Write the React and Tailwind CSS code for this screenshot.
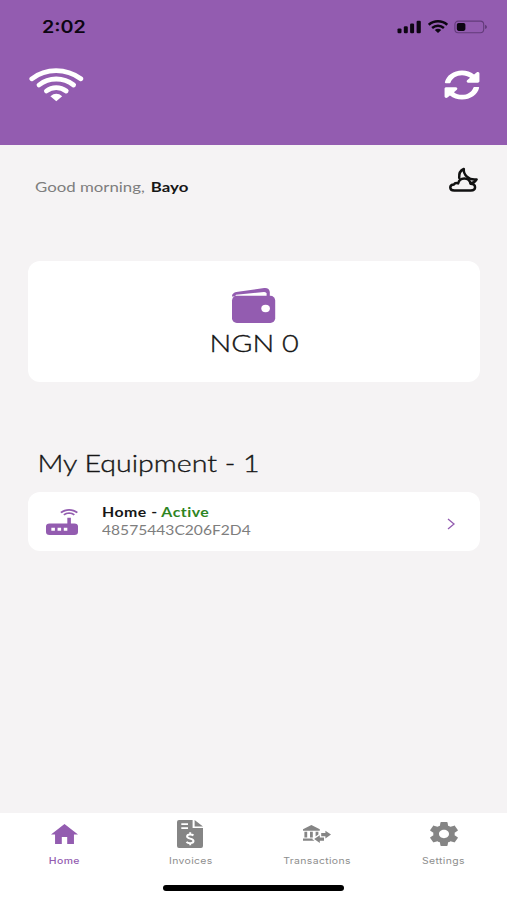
import React from 'react';
import { FaSyncAlt } from 'react-icons/fa';

const WifiIcon = () => (
  <svg width="56" height="34" viewBox="0 0 56 34" fill="none" stroke="#fff" strokeWidth="4.8" strokeLinecap="round">
    <path d="M3.8 10.8C18 0 38 0 52.8 10.8" />
    <path d="M11 17C21 9 35.4 9 45.6 17" />
    <path d="M18.4 23C24 18.4 32.4 18.4 38.2 23" />
    <path d="M22.4 28.2Q28.3 23.4 34.2 28.2L28.3 33.2Z" fill="#fff" stroke="none" />
  </svg>
);

const SignalIcon = () => (
  <svg width="25" height="14" viewBox="0 0 25 14" fill="#0d0612">
    <rect x="0.5" y="8.4" width="4" height="4.8" rx="1.2" />
    <rect x="6.8" y="6.2" width="4" height="7" rx="1.2" />
    <rect x="13.1" y="3.5" width="4" height="9.7" rx="1.2" />
    <rect x="19.6" y="0.8" width="4.2" height="12.4" rx="1.2" />
  </svg>
);

const StatusWifiIcon = () => (
  <svg width="20" height="13" viewBox="0 0 20 13" fill="none" stroke="#0d0612" strokeWidth="2.5">
    <path d="M0.8 4.8C6 .2 14 .2 19.2 4.8" />
    <path d="M4.1 8C7.5 5 12.5 5 15.9 8" />
    <path d="M6.8 10.1Q10 7.5 13.2 10.1L10 13Z" fill="#0d0612" stroke="none" />
  </svg>
);

const BatteryIcon = () => (
  <svg width="34" height="14" viewBox="0 0 34 14" fill="none">
    <rect x="0.9" y="1.1" width="28.8" height="11.6" rx="3.4" stroke="#633b7a" strokeWidth="1.1" />
    <rect x="2.8" y="2.9" width="8.6" height="8" rx="1.8" fill="#0d0612" />
    <path d="M31 4.7Q33 5.4 33 6.9Q33 8.4 31 9.1Z" fill="#633b7a" />
  </svg>
);

const NightIcon = () => (
  <svg width="31" height="26" viewBox="0 0 31 26" fill="none" stroke="#111" strokeWidth="2.5" strokeLinejoin="round" strokeLinecap="round">
    <path d="M6.2 23.4H22.8C28.4 23.4 28.6 17 22.6 16.8C21.4 9.6 11.3 9.8 10.2 16.4C8 15.6 6.6 16.3 6 17.4C1 17.5 1 23.4 6.2 23.4Z" />
    <path d="M11.2 11C10.8 6.6 12.4 3.4 15.8 2C15.2 7.4 20.4 13.6 28.6 12.4C27.1 15 25.1 16 22.7 16.2" />
  </svg>
);

const WalletIcon = () => (
  <svg className="-ml-[2px]" width="45" height="37" viewBox="0 0 45 37">
    <path d="M7 4.7L33.2 1C36.4 .6 38.7 2.3 38.8 5V9.6H1C1 7 2.7 5.2 7 4.7Z" fill="#935cb0" />
    <path d="M4.4 8.9L5 7.8L33 5Q35.4 4.9 35.6 6.6V8.9Z" fill="#fff" />
    <rect x="1" y="8.8" width="43.2" height="27.2" rx="4.8" fill="#935cb0" />
    <ellipse cx="34.6" cy="21.5" rx="4.3" ry="3.7" fill="#fff" />
  </svg>
);

const RouterIcon = () => (
  <svg width="32" height="26" viewBox="3 3 18 18" preserveAspectRatio="none" fill="#935cb0">
    <path d="M20.2 5.9l.8-.8C19.6 3.7 17.8 3 16 3s-3.6.7-5 2.1l.8.8C13 4.8 14.5 4.2 16 4.2s3 .6 4.2 1.7m-.9.8c-.9-.9-2.1-1.4-3.3-1.4s-2.4.5-3.3 1.4l.8.8c.7-.7 1.6-1 2.5-1s1.8.3 2.5 1l.8-.8M19 13h-2V9h-2v4H5a2 2 0 0 0-2 2v4a2 2 0 0 0 2 2h14a2 2 0 0 0 2-2v-4a2 2 0 0 0-2-2M8 18H6v-2h2v2m3.5 0h-2v-2h2v2m3.5 0h-2v-2h2v2Z" />
  </svg>
);

const HomeIcon = () => (
  <svg width="27" height="20" viewBox="2 3 20 17" preserveAspectRatio="none" fill="#935cb0">
    <path d="M10 20v-6h4v6h5v-8h3L12 3 2 12h3v8z" />
  </svg>
);

const InvoiceIcon = () => (
  <svg className="-ml-px" width="26" height="28" viewBox="0 0 26 28" fill="#858585">
    <path d="M2 0H15.6V8H26V26Q26 28 24 28H2Q0 28 0 26V2Q0 0 2 0Z" />
    <path d="M17.6 0L26 6.5H17.6Z" />
    <path d="M4.3 4.2H11M4.3 8.2H11" stroke="#fff" strokeWidth="1.7" />
    <path d="M16.4 15.5C15.4 14.4 10.1 13.8 10.1 16.6C10.1 19.4 16.5 17.8 16.5 21C16.5 23.8 11 23.6 9.5 21.8M13.2 12.2V14.7M13.2 23V25.3" fill="none" stroke="#fff" strokeWidth="2" />
  </svg>
);

const TransferIcon = () => (
  <svg width="28" height="18" viewBox="2 4 20 16" preserveAspectRatio="none" fill="#858585">
    <path d="M15 14V11H18V9L22 12.5L18 16V14H15M14 7.7V9H2V7.7L8 4L14 7.7M7 10H9V15H7V10M3 10H5V15H3V10M13 10V12.5L11 14.3V10H13M9.1 16L8.5 16.5L10.2 18H2V16H9.1M17 15V18H14V20L10 16.5L14 13V15H17Z" />
  </svg>
);

const SettingsIcon = () => (
  <svg width="28" height="24" viewBox="2.2 2 19.6 20" preserveAspectRatio="none" fill="#858585">
    <path d="M19.43 12.98c.04-.32.07-.64.07-.98s-.03-.66-.07-.98l2.11-1.65c.19-.15.24-.42.12-.64l-2-3.46c-.12-.22-.39-.3-.61-.22l-2.49 1c-.52-.4-1.08-.73-1.69-.98l-.38-2.65C14.46 2.18 14.25 2 14 2h-4c-.25 0-.46.18-.49.42l-.38 2.65c-.61.25-1.17.59-1.69.98l-2.49-1c-.23-.09-.49 0-.61.22l-2 3.46c-.13.22-.07.49.12.64l2.11 1.65c-.04.32-.07.65-.07.98s.03.66.07.98l-2.11 1.65c-.19.15-.24.42-.12.64l2 3.46c.12.22.39.3.61.22l2.49-1c.52.4 1.08.73 1.69.98l.38 2.65c.03.24.24.42.49.42h4c.25 0 .46-.18.49-.42l.38-2.65c.61-.25 1.17-.59 1.69-.98l2.49 1c.23.09.49 0 .61-.22l2-3.46c.12-.22.07-.49-.12-.64l-2.11-1.65zM12 15.5c-1.93 0-3.5-1.57-3.5-3.5s1.57-3.5 3.5-3.5 3.5 1.57 3.5 3.5-1.57 3.5-3.5 3.5z" />
  </svg>
);

const tabs = [
  { label: 'Home', icon: HomeIcon, active: true },
  { label: 'Invoices', icon: InvoiceIcon },
  { label: 'Transactions', icon: TransferIcon },
  { label: 'Settings', icon: SettingsIcon },
];

const App = () => {
  return (
    <div className="flex h-[900px] w-[507px] flex-col overflow-hidden bg-[#f5f3f4] font-['Lato',sans-serif] text-[#161616]">
      <header className="h-[145px] shrink-0 bg-[#935cb0]">
        <div className="flex h-[53px] items-center justify-between pl-[42px] pr-[19px]">
          <span className="origin-left scale-x-[1.16] pt-[2px] font-['Inter',sans-serif] text-[17px] font-semibold leading-none text-[#0d0612]">2:02</span>
          <div className="flex items-center gap-[6px]">
            <SignalIcon />
            <StatusWifiIcon />
            <BatteryIcon />
          </div>
        </div>
        <div className="flex h-[63px] items-center justify-between pl-[28px] pr-[27px]">
          <WifiIcon />
          <FaSyncAlt className="h-[30px] w-[36px] text-white" preserveAspectRatio="none" />
        </div>
      </header>

      <main className="flex-1 pl-[28px] pr-[27px]">
        <div className="flex items-start justify-between pl-[7px] pr-px pt-[22px]">
          <p className="mt-[10px] origin-left scale-x-[1.2] whitespace-nowrap text-[14px] leading-5 text-[#7e7e7e]">
            Good morning, <span className="ml-[1.5px] font-bold text-[#161616]">Bayo</span>
          </p>
          <NightIcon />
        </div>

        <section className="mt-[64px] flex h-[121px] flex-col items-center rounded-xl bg-white pt-[26px]">
          <WalletIcon />
          <p className="mt-[3px] scale-x-[1.2] text-[24px] font-light leading-8 [-webkit-text-stroke:0.35px_#161616]">NGN 0</p>
        </section>

        <h2 className="mt-[65px] w-fit origin-left scale-x-[1.19] pl-[8px] text-[24px] font-light leading-8 [-webkit-text-stroke:0.35px_#161616]">My Equipment - 1</h2>

        <section className="mt-[13px] flex h-[59px] items-center rounded-xl bg-white pl-[18px] pr-[24px]">
          <RouterIcon />
          <div className="-mt-[2px] ml-[24px] flex-1">
            <p className="w-fit origin-left scale-x-[1.22] text-[13px] font-bold leading-[18px] tracking-[0.4px]">
              Home - <span className="text-[#2e8523]">Active</span>
            </p>
            <p className="w-fit origin-left scale-x-[1.2] text-[13px] leading-[18px] text-[#7e7e7e]">48575443C206F2D4</p>
          </div>
          <svg className="mt-[4px]" width="10" height="12" viewBox="0 0 10 12" fill="none" stroke="#935cb0" strokeWidth="1.3">
            <path d="M2 1L8 6L2 11" />
          </svg>
        </section>
      </main>

      <nav className="flex h-[87px] shrink-0 flex-col bg-white">
        <div className="grid grid-cols-4 pl-px">
          {tabs.map(({ label, icon: Icon, active }) => (
            <div key={label} className="flex flex-col items-center pt-[7px]">
              <div className="flex h-[28px] items-center">
                <Icon />
              </div>
              <span className={`mt-[7px] scale-x-[1.16] font-['Inter',sans-serif] text-[9px] leading-3 tracking-[0.3px] ${active ? 'font-medium text-[#935cb0]' : 'text-[#8e8e8e]'}`}>
                {label}
              </span>
            </div>
          ))}
        </div>
        <div className="mx-auto mt-[18px] h-[6px] w-[181px] rounded-full bg-black" />
      </nav>
    </div>
  );
};

export default App;
